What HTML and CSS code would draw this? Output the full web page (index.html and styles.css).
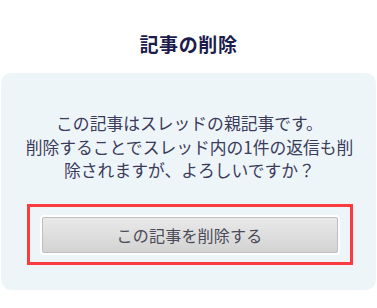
FILE: index.html
```html
<!DOCTYPE html>
<html lang="ja">
<head>
<meta charset="utf-8">
<link rel="stylesheet" href="styles.css">
</head>
<body>
<div class="page">
  <h1 class="title">記事の削除</h1>
  <div class="panel">
    <p class="message">この記事はスレッドの親記事です。<br>削除することでスレッド内の1件の返信も削除されますが、よろしいですか？</p>
    <div class="highlight">
      <button class="delete-btn" type="button">この記事を削除する</button>
    </div>
  </div>
</div>
</body>
</html>
```
FILE: styles.css
```css
html, body {
  margin: 0;
  padding: 0;
  background: #ffffff;
}
body {
  font-family: "Noto Sans CJK JP", "Noto Sans", sans-serif;
  width: 377px;
  height: 308px;
  overflow: hidden;
}
.page {
  display: flex;
  flex-direction: column;
}
.title {
  margin: 0;
  padding-top: 30px;
  height: 28px;
  line-height: 28px;
  margin-bottom: 15px;
  font-size: 19px;
  font-weight: bold;
  color: #1c1c4c;
  text-align: center;
  letter-spacing: 0.6px;
}
.panel {
  margin: 0 1px;
  height: 217px;
  box-sizing: border-box;
  background: #eef5f9;
  border-radius: 10px;
  padding: 39px 18px 0 20px;
  display: flex;
  flex-direction: column;
  align-items: center;
}
.message {
  margin: 0;
  font-size: 16.8px;
  line-height: 23.5px;
  color: #3b3b5a;
  text-align: center;
}
.highlight {
  margin-top: 21px;
  width: 326px;
  height: 61px;
  box-sizing: border-box;
  border: 3px solid #fb3b3e;
  padding: 10px 12px 9px 12px;
  display: flex;
}
.delete-btn {
  flex: 1;
  height: 36px;
  box-sizing: border-box;
  border: 1px solid #bdbdbd;
  border-radius: 2px;
  background: linear-gradient(#e9e9e9, #d3d3d3);
  box-shadow: 0 0 0 2px #ffffff;
  font-family: "Noto Sans CJK JP", "Noto Sans", sans-serif;
  font-size: 16px;
  color: #4a4a58;
  padding: 0;
  letter-spacing: 0.2px;
}
```
